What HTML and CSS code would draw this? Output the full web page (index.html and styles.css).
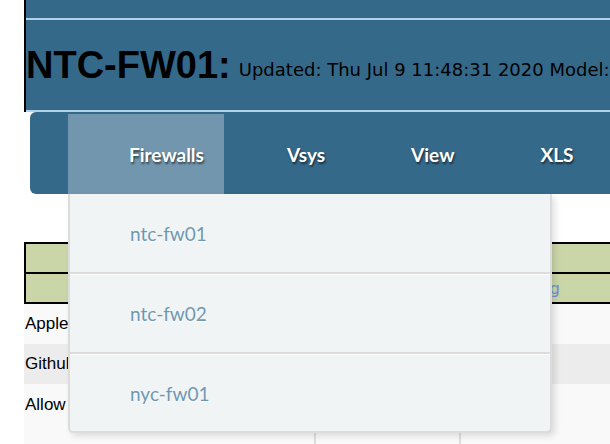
FILE: index.html
```html
<!DOCTYPE html>
<html lang="en">
<head>
<meta charset="utf-8">
<title>NTC-FW01</title>
<link rel="stylesheet" href="styles.css">
</head>
<body>
<div class="page">
  <header class="banner">
    <div class="banner-inner">
      <h1 class="title">NTC-FW01:</h1><span class="meta">Updated: Thu Jul 9 11:48:31 2020 Model:</span>
    </div>
  </header>

  <nav class="menu">
    <div class="menu-item active">
      <span class="menu-label">Firewalls</span>
      <ul class="dropdown">
        <li class="dropdown-item">ntc-fw01</li>
        <li class="dropdown-item">ntc-fw02</li>
        <li class="dropdown-item">nyc-fw01</li>
      </ul>
    </div>
    <div class="menu-item"><span class="menu-label">Vsys</span></div>
    <div class="menu-item"><span class="menu-label">View</span></div>
    <div class="menu-item"><span class="menu-label">XLS</span></div>
  </nav>

  <section class="data">
    <div class="band">
      <div class="band-row"></div>
      <div class="band-row band-links"><a class="band-link">Download Config</a></div>
    </div>
    <div class="row odd"><div class="cell">Apple Updates</div><div class="cell col"></div><div class="cell col"></div></div>
    <div class="row even"><div class="cell">Github Access</div><div class="cell col"></div><div class="cell col"></div></div>
    <div class="row odd tall"><div class="cell">Allow Web</div><div class="cell col"></div><div class="cell col"></div></div>
  </section>
</div>
</body>
</html>
```

FILE: styles.css
```css
html, body {
  margin: 0;
  padding: 0;
  overflow: hidden;
  background: #ffffff;
}

body {
  font-family: "Liberation Sans", Arial, sans-serif;
}

.page {
  width: 760px;
  padding-left: 24px;
}

/* banner */
.banner {
  background: #35698a;
  border-left: 2px solid #000;
  padding-top: 18px;
}

.banner-inner {
  border-top: 2px solid #b3d1ea;
  border-bottom: 2px solid #b3d1ea;
  padding-top: 26px;
  height: 64px;
  box-sizing: content-box;
  white-space: nowrap;
}

.title {
  display: inline;
  margin: 0;
  font: bold 38px/38px "Liberation Sans", Arial, sans-serif;
  color: #000;
}

.meta {
  display: inline;
  margin-left: 8px;
  font: 18px "DejaVu Sans", Verdana, sans-serif;
  color: #000;
  vertical-align: 2px;
}

/* menu */
.menu {
  display: flex;
  margin-left: 6px;
  padding: 2px 0 0 38px;
  height: 80px;
  background: #35698a;
  border-radius: 6px;
}

.menu-item {
  position: relative;
  display: flex;
  align-items: center;
  padding: 0 20px 0 61px;
  font: bold 19px Lato, "Open Sans", sans-serif;
  color: #fff;
  text-shadow: 1px 2px 2px rgba(0, 0, 0, 0.55);
}

.menu-item + .menu-item {
  padding: 0 23px 0 63px;
}

.menu-item.active {
  background: rgba(255, 255, 255, 0.3);
}

.dropdown {
  position: absolute;
  top: 100%;
  left: 0;
  width: 480px;
  margin: 0;
  padding: 0;
  list-style: none;
  background: #f0f4f5;
  border: 2px solid #dcdcdc;
  border-top: 0;
  border-radius: 0 0 5px 5px;
  box-shadow: 3px 3px 6px rgba(0, 0, 0, 0.12);
  z-index: 5;
  text-shadow: none;
}

.dropdown-item {
  display: flex;
  align-items: center;
  height: 77px;
  padding-left: 60px;
  font: 19px Lato, "Open Sans", sans-serif;
  color: #6f98b0;
  text-shadow: 0 1px 1px #fff;
  border-top: 1px solid #fff;
  border-bottom: 2px solid #dcdcdc;
}

.dropdown-item:first-child {
  border-top: 0;
  height: 78px;
}

.dropdown-item:last-child {
  border-bottom: 0;
  height: 76px;
}

/* data */
.data {
  margin-top: 48px;
  width: 700px;
}

.band {
  background: #cbd6a8;
  border: 2px solid #000;
}

.band-row {
  height: 28px;
}

.band-row + .band-row {
  border-top: 2px solid #000;
}

.band-links {
  display: flex;
  align-items: center;
  justify-content: flex-end;
  padding-right: 162px;
}

.band-link {
  font: 16px "DejaVu Sans", Verdana, sans-serif;
  color: #6f90dc;
}

.row {
  display: grid;
  grid-template-columns: 290px 145px 1fr;
  height: 40px;
  font-size: 17px;
  color: #000;
}

.row.odd { background: #f9f9f9; }
.row.even { background: #ececec; }
.row.tall { height: 90px; }

.cell {
  display: flex;
  align-items: center;
  padding-left: 1px;
  white-space: nowrap;
}

.row.tall .cell {
  align-items: flex-start;
  padding-top: 11px;
}

.cell.col {
  border-left: 2px solid #dedede;
}
```
